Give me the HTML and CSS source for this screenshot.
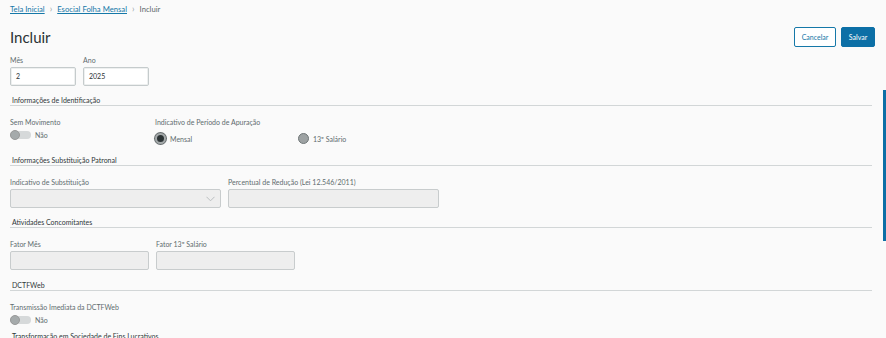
FILE: index.html
```html
<!DOCTYPE html>
<html lang="pt-BR">
<head>
<meta charset="utf-8">
<title>Incluir</title>
<link rel="stylesheet" href="styles.css">
</head>
<body>
<div class="page">
  <nav class="breadcrumb">
    <a href="#">Tela Inicial</a>
    <span class="sep">&#8250;</span>
    <a href="#">Esocial Folha Mensal</a>
    <span class="sep">&#8250;</span>
    <span class="current">Incluir</span>
  </nav>
  <header class="header">
    <h1>Incluir</h1>
    <div class="actions">
      <button class="btn btn-secondary">Cancelar</button>
      <button class="btn btn-primary">Salvar</button>
    </div>
  </header>

  <div class="row">
    <div class="field w-small">
      <label>Mês</label>
      <div class="input">2</div>
    </div>
    <div class="field w-small">
      <label>Ano</label>
      <div class="input">2025</div>
    </div>
  </div>

  <div class="section s-tight">Informações de Identificação</div>
  <div class="row">
    <div class="field w-switch">
      <label>Sem Movimento</label>
      <div class="switch"><span class="track"><span class="knob"></span></span><span>Não</span></div>
    </div>
    <div class="field">
      <label>Indicativo de Período de Apuração</label>
      <div class="radios">
        <span class="radio checked"><span class="dot"></span>Mensal</span>
        <span class="radio"><span class="dot"></span>13º Salário</span>
      </div>
    </div>
  </div>

  <div class="section s-loose">Informações Substituição Patronal</div>
  <div class="row">
    <div class="field w-large">
      <label>Indicativo de Substituição</label>
      <div class="input disabled select">
        <svg width="9" height="6" viewBox="0 0 9 6"><path d="M0.5 0.8 L4.5 4.8 L8.5 0.8" fill="none" stroke="#b4b9bb" stroke-width="0.9"/></svg>
      </div>
    </div>
    <div class="field w-large">
      <label>Percentual de Redução (Lei 12.546/2011)</label>
      <div class="input disabled"></div>
    </div>
  </div>

  <div class="section s-tight">Atividades Concomitantes</div>
  <div class="row">
    <div class="field w-med">
      <label>Fator Mês</label>
      <div class="input disabled"></div>
    </div>
    <div class="field w-med">
      <label>Fator 13º Salário</label>
      <div class="input disabled"></div>
    </div>
  </div>

  <div class="section">DCTFWeb</div>
  <div class="row">
    <div class="field">
      <label>Transmissão Imediata da DCTFWeb</label>
      <div class="switch"><span class="track"><span class="knob"></span></span><span>Não</span></div>
    </div>
  </div>

  <div class="section s-last">Transformação em Sociedade de Fins Lucrativos</div>
</div>
<div class="scrollbar"></div>
</body>
</html>
```
FILE: styles.css
```css
* { box-sizing: border-box; }
html, body { margin: 0; padding: 0; }
body {
  background: #fafafa;
  font-family: Lato, "Noto Sans", sans-serif;
  color: #5b686b;
  width: 886px;
  height: 338px;
  overflow: hidden;
  position: relative;
}
.page {
  padding: 3px 11px 0 10px;
}
.breadcrumb {
  font-size: 7.7px;
  line-height: 12px;
  display: flex;
  align-items: center;
}
.breadcrumb a {
  color: #1578a8;
  text-decoration: underline;
}
.breadcrumb .sep {
  color: #9aa4a7;
  margin: 0 5px;
  font-size: 9px;
}
.breadcrumb .current { color: #5b686b; }

.header {
  display: flex;
  justify-content: space-between;
  align-items: flex-start;
  margin-top: 12px;
  height: 28px;
}
.header h1 {
  margin: 0;
  font-weight: 400;
  font-size: 15px;
  line-height: 20px;
  color: #2a3234;
}
.actions { display: flex; gap: 5px; }
.btn {
  font-family: inherit;
  font-size: 7px;
  height: 20px;
  border-radius: 2px;
  padding: 0;
  cursor: pointer;
}
.btn-secondary {
  width: 42px;
  background: #fff;
  color: #1578a8;
  border: 1px solid #1578a8;
}
.btn-primary {
  width: 34px;
  background: #0c6fa6;
  color: #fff;
  border: 1px solid #0c6fa6;
}

.row { display: flex; gap: 7px; }
.field { display: flex; flex-direction: column; }
.field label {
  font-size: 7px;
  line-height: 10px;
  color: #5f6c6f;
  margin-bottom: 2px;
}
.w-small { width: 66px; }
.w-switch { width: 138px; }
.w-large { width: 211px; }
.w-med { width: 139px; }

.input {
  height: 19px;
  border: 1px solid #c5cbcc;
  border-radius: 2px;
  background: #fff;
  font-size: 7px;
  line-height: 17px;
  padding: 0 5px;
  color: #2a3234;
  box-shadow: inset 0 0 0 1px #eef0f0;
}
.input.disabled {
  background: #eeeeee;
  border-color: #c8cccd;
  box-shadow: none;
}
.select {
  display: flex;
  justify-content: flex-end;
  align-items: center;
}

.section {
  font-size: 7px;
  line-height: 10px;
  color: #2f3739;
  padding: 0 0 0 2px;
  border-bottom: 1px solid #d2d6d7;
  margin: 10px 3px 11px 0;
}
.section.s-tight { margin-top: 9px; }
.section.s-loose { margin-top: 11px; }
.section.s-last { margin-top: 6px; }

.switch {
  display: flex;
  align-items: center;
  gap: 4px;
  font-size: 7px;
  height: 11px;
  color: #5f6c6f;
}
.track {
  position: relative;
  width: 21px;
  height: 8px;
  border-radius: 4px;
  background: #d6d9da;
}
.knob {
  position: absolute;
  left: 0;
  top: -1px;
  width: 10px;
  height: 10px;
  border-radius: 50%;
  background: #a5aaab;
  border: 1px solid #999;
}

.radios {
  display: flex;
  margin-top: 4px;
}
.radio {
  display: flex;
  align-items: center;
  gap: 4px;
  font-size: 7px;
  color: #5f6c6f;
  width: 143px;
}
.radio .dot {
  width: 11px;
  height: 11px;
  border-radius: 50%;
  background: #9da2a3;
  border: 1px solid #6f7677;
}
.radio.checked .dot {
  background: #2c3335;
  border: 2px solid #a4a9aa;
  box-shadow: 0 0 0 1px #666c6d;
}

.scrollbar {
  position: absolute;
  left: 883px;
  top: 90px;
  width: 3px;
  height: 151px;
  background: #0c6fa6;
}
```
